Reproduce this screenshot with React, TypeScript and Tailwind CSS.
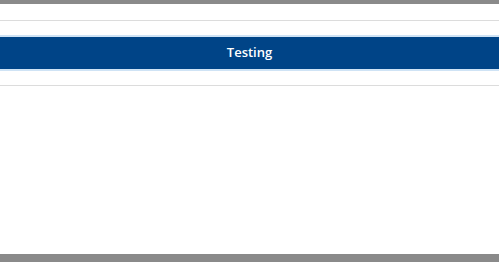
export default function App() {
  return (
    <div className="flex h-[262px] w-full flex-col bg-white" style={{ fontFamily: '"Open Sans", "Noto Sans", sans-serif' }}>
      <div className="h-1 bg-[#8a8a8a]" />
      <div className="h-4" />
      <div className="h-px bg-[#dcdcdc]" />
      <div className="h-[14px]" />
      <div className="flex h-9 items-center justify-center border-y-2 border-[#cfe3f5] bg-[#004487] text-[13px] font-semibold text-white">
        Testing
      </div>
      <div className="h-[14px]" />
      <div className="h-px bg-[#dcdcdc]" />
      <div className="flex-1" />
      <div className="h-2 bg-[#8a8a8a]" />
    </div>
  )
}
